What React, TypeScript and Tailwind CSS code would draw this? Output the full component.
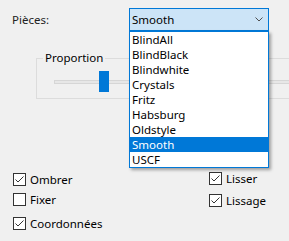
import React from "react";

const pieces = [
  "BlindAll",
  "BlindBlack",
  "Blindwhite",
  "Crystals",
  "Fritz",
  "Habsburg",
  "Oldstyle",
  "Smooth",
  "USCF",
];

function Check({ label, checked }: { label: string; checked: boolean }) {
  return (
    <div className="flex items-center gap-[4px] h-[13px]">
      <span className="w-[13px] h-[13px] border border-[#333333] bg-white flex-none">
        {checked && (
          <svg width="11" height="11" viewBox="0 0 11 11" className="block">
            <path d="M1.5 5.5 L4 8 L9.5 2.5" fill="none" stroke="#333333" strokeWidth="1" />
          </svg>
        )}
      </span>
      <span className="leading-none">{label}</span>
    </div>
  );
}

export default function App() {
  const selected = "Smooth";

  return (
    <div className="w-[289px] h-[241px] overflow-hidden bg-[#f0f0f0] text-[11.5px] text-black font-['Noto_Sans',sans-serif]">
      {/* Pièces row */}
      <div className="flex items-center pt-[8px] pl-[12px]">
        <span className="w-[117px] text-[#222]">Pièces:</span>
        <div className="relative w-[140px]">
          <div className="h-[23px] border border-[#0078d7] bg-[#cce4f7] flex items-center justify-between pl-[2px] pr-[5px]">
            <span>{selected}</span>
            <svg width="8" height="5" viewBox="0 0 8 5">
              <path d="M0.5 0.5 L4 4 L7.5 0.5" fill="none" stroke="#505050" strokeWidth="1" />
            </svg>
          </div>
          <ul className="absolute left-0 top-[23px] w-[140px] border border-[#0078d7] bg-white z-10 shadow-[2px_2px_3px_rgba(0,0,0,0.35)]">
            {pieces.map((p) => (
              <li
                key={p}
                className={`h-[15px] leading-[15px] pl-[2px] ${
                  p === selected ? "bg-[#0078d7] text-white" : ""
                }`}
              >
                {p}
              </li>
            ))}
          </ul>
        </div>
      </div>

      {/* Proportion group */}
      <fieldset className="mt-[19px] ml-[36px] w-[270px] h-[49px] border border-[#dcdcdc]">
        <legend className="ml-[6px] px-[2px] leading-[16px]">Proportion</legend>
        <div className="relative h-[21px] mt-[5px]">
          <div className="absolute left-[17px] right-0 top-[9px] h-[4px] border border-[#d6d6d6] bg-[#e7e7e7]" />
          <div className="absolute left-[62px] top-0 w-[10px] h-[21px] bg-[#0078d7]" />
        </div>
      </fieldset>

      {/* Options */}
      <div className="grid grid-cols-[196px_1fr] pl-[13px] mt-[73px]">
        <div className="flex flex-col pt-[1px]">
          <Check label="Ombrer" checked />
          <div className="mt-[7px]">
            <Check label="Fixer" checked={false} />
          </div>
          <div className="mt-[11px]">
            <Check label="Coordonnées" checked />
          </div>
        </div>
        <div className="flex flex-col">
          <Check label="Lisser" checked />
          <div className="mt-[9px]">
            <Check label="Lissage" checked />
          </div>
        </div>
      </div>
    </div>
  );
}
